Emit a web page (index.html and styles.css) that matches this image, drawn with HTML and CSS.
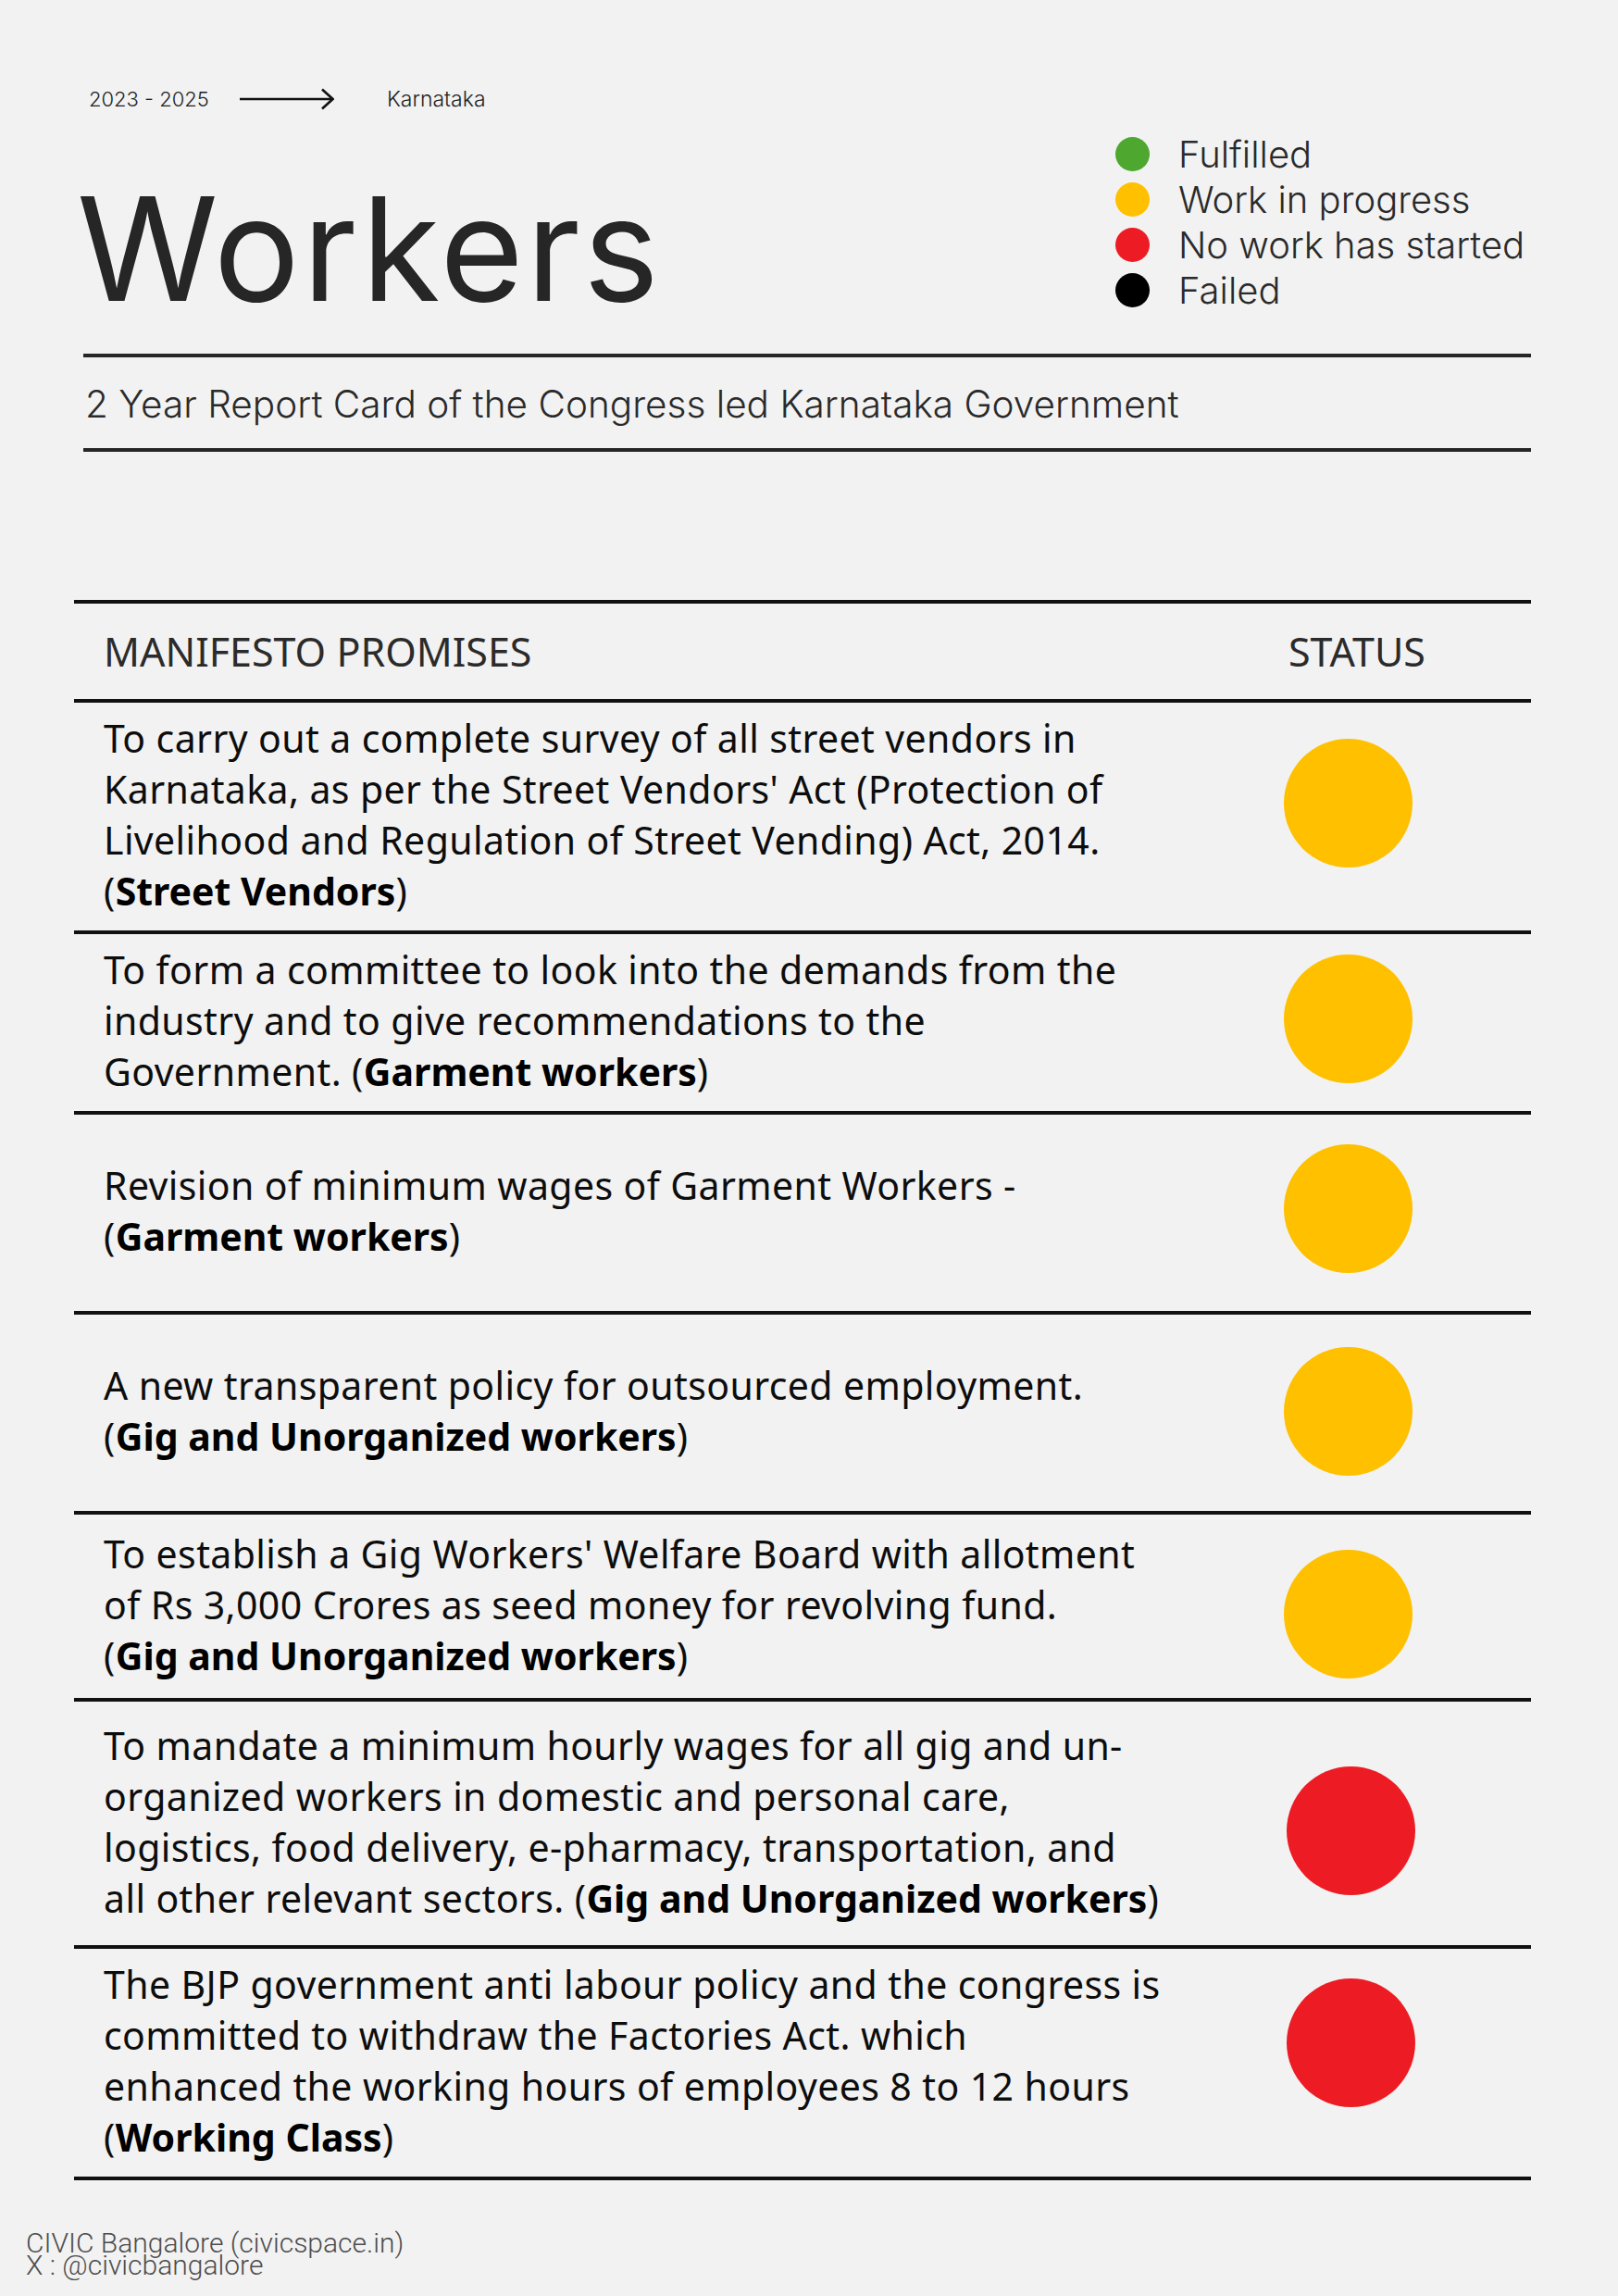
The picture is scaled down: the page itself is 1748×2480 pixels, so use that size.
FILE: index.html
```html
<!DOCTYPE html>
<html lang="en">
<head>
<meta charset="utf-8">
<title>Workers – 2 Year Report Card</title>
<link rel="stylesheet" href="styles.css">
</head>
<body>
<div class="page">
  <header class="top">
    <div class="top-left">
      <div class="meta">
        <span class="meta-years">2023 - 2025</span>
        <svg class="meta-arrow" viewBox="0 0 102 24" aria-hidden="true">
          <line x1="0" y1="12" x2="100" y2="12" stroke="#111" stroke-width="2.6"/>
          <polyline points="89,1.5 100.5,12 89,22.5" fill="none" stroke="#111" stroke-width="2.6" stroke-linejoin="miter"/>
        </svg>
        <span class="meta-place">Karnataka</span>
      </div>
      <h1 class="title">Workers</h1>
    </div>
    <ul class="legend">
      <li class="legend-item"><span class="legend-dot legend-dot--green"></span>Fulfilled</li>
      <li class="legend-item"><span class="legend-dot legend-dot--yellow"></span>Work in progress</li>
      <li class="legend-item"><span class="legend-dot legend-dot--red"></span>No work has started</li>
      <li class="legend-item"><span class="legend-dot legend-dot--black"></span>Failed</li>
    </ul>
  </header>

  <div class="subtitle">2 Year Report Card of the Congress led Karnataka Government</div>

  <section class="table">
    <div class="thead">
      <div class="th th-promise">MANIFESTO PROMISES</div>
      <div class="th th-status">STATUS</div>
    </div>
    <div class="tbody">
      <div class="row">
        <p class="promise">To carry out a complete survey of all street vendors in<br>Karnataka, as per the Street Vendors' Act (Protection of<br>Livelihood and Regulation of Street Vending) Act, 2014.<br>(<b>Street Vendors</b>)</p>
        <div class="status"><span class="dot dot--yellow"></span></div>
      </div>
      <div class="row">
        <p class="promise">To form a committee to look into the demands from the<br>industry and to give recommendations to the<br>Government. (<b>Garment workers</b>)</p>
        <div class="status"><span class="dot dot--yellow"></span></div>
      </div>
      <div class="row">
        <p class="promise">Revision of minimum wages of Garment Workers -<br>(<b>Garment workers</b>)</p>
        <div class="status"><span class="dot dot--yellow"></span></div>
      </div>
      <div class="row">
        <p class="promise">A new transparent policy for outsourced employment.<br>(<b>Gig and Unorganized workers</b>)</p>
        <div class="status"><span class="dot dot--yellow"></span></div>
      </div>
      <div class="row">
        <p class="promise">To establish a Gig Workers' Welfare Board with allotment<br>of Rs 3,000 Crores as seed money for revolving fund.<br>(<b>Gig and Unorganized workers</b>)</p>
        <div class="status"><span class="dot dot--yellow"></span></div>
      </div>
      <div class="row">
        <p class="promise">To mandate a minimum hourly wages for all gig and un-<br>organized workers in domestic and personal care,<br>logistics, food delivery, e-pharmacy, transportation, and<br>all other relevant sectors. (<b>Gig and Unorganized workers</b>)</p>
        <div class="status"><span class="dot dot--red"></span></div>
      </div>
      <div class="row">
        <p class="promise">The BJP government anti labour policy and the congress is<br>committed to withdraw the Factories Act. which<br>enhanced the working hours of employees 8 to 12 hours<br>(<b>Working Class</b>)</p>
        <div class="status"><span class="dot dot--red"></span></div>
      </div>
    </div>
  </section>

  <footer class="footer">
    <div>CIVIC Bangalore (civicspace.in)</div>
    <div>X : @civicbangalore</div>
  </footer>
</div>
</body>
</html>
```

FILE: styles.css
```css
* { box-sizing: border-box; }

body {
  margin: 0;
  background: #f2f2f2;
}

.page {
  width: 1748px;
  height: 2480px;
  background: #f2f2f2;
  overflow: hidden;
}

/* ---------- top header ---------- */
.top {
  display: grid;
  grid-template-columns: 1122px 1fr;
  padding: 92px 0 0 83px;
}

.meta {
  display: flex;
  align-items: center;
  height: 30px;
  padding-left: 13px;
  font-family: Inter, "Liberation Sans", sans-serif;
  font-weight: 300;
  font-size: 22px;
  line-height: 30px;
  color: #1f1f1f;
}

.meta-place {
  font-size: 23px;
}

.meta-arrow {
  width: 102px;
  height: 24px;
  margin: 0 57px 0 33px;
  flex: none;
}

.title {
  margin: 69px 0 0;
  font-family: Inter, "Liberation Sans", sans-serif;
  font-weight: 400;
  font-size: 155px;
  line-height: 155px;
  letter-spacing: 3px;
  color: #262626;
}

.legend {
  list-style: none;
  margin: 50px 0 0;
  padding: 0;
  font-family: Inter, "Liberation Sans", sans-serif;
  font-weight: 300;
  font-size: 40px;
  color: #2a2a2a;
}

.legend-item {
  display: flex;
  align-items: center;
  height: 49px;
  line-height: 49px;
  gap: 31px;
}

.legend-dot {
  width: 37px;
  height: 37px;
  border-radius: 50%;
  flex: none;
}
.legend-dot--green { background: #4ea72e; }
.legend-dot--yellow { background: #ffc000; }
.legend-dot--red { background: #ed1c24; }
.legend-dot--black { background: #000; }

/* ---------- subtitle band ---------- */
.subtitle {
  width: 1564px;
  margin: 36px 0 0 90px;
  padding: 26px 0 22px 2px;
  border-top: 4px solid #262626;
  border-bottom: 4px solid #262626;
  font-family: Inter, "Liberation Sans", sans-serif;
  font-weight: 300;
  font-size: 40.5px;
  line-height: 50px;
  color: #2a2a2a;
}

/* ---------- table ---------- */
.table {
  width: 1574px;
  margin: 160px 0 0 80px;
  border-bottom: 4px solid #111;
  font-family: "Noto Sans", "Open Sans", sans-serif;
}

.thead,
.row {
  display: grid;
  grid-template-columns: 1307px 1fr;
  align-items: center;
  border-top: 4px solid #111;
}

.thead {
  height: 107px;
  font-size: 43px;
  line-height: 55px;
  color: #2b2b2b;
}

.th-promise { padding-left: 32px; }
.th-status { padding-left: 5px; }

.promise {
  margin: 0;
  padding: 0 0 4px 32px;
  font-size: 41px;
  line-height: 55px;
  letter-spacing: 0.4px;
  color: #0d0d0d;
}

.promise b {
  font-weight: 700;
  letter-spacing: 0;
  color: #000;
}

.status {
  display: flex;
  flex-direction: column;
}

.dot {
  width: 139px;
  height: 139px;
  border-radius: 50%;
}
.dot--yellow { background: #ffc000; }
.dot--red { background: #ed1c24; margin-left: 3px; }

/* row heights and dot placement follow the source layout */
.row:nth-child(1) { height: 250px; }
.row:nth-child(1) .dot { margin-bottom: 29px; }
.row:nth-child(2) { height: 195px; }
.row:nth-child(2) .dot { margin-bottom: 8px; }
.row:nth-child(3) { height: 216px; }
.row:nth-child(3) .dot { margin-bottom: 10px; }
.row:nth-child(4) { height: 216px; }
.row:nth-child(4) .dot { margin-bottom: 3px; }
.row:nth-child(5) { height: 202px; }
.row:nth-child(5) .dot { margin-top: 17px; }
.row:nth-child(6) { height: 267px; }
.row:nth-child(6) .dot { margin-top: 16px; }
.row:nth-child(7) { height: 250px; }
.row:nth-child(7) .dot { margin-bottom: 43px; }

/* ---------- footer ---------- */
.footer {
  margin: 56px 0 0 28px;
  font-family: Roboto, "Liberation Sans", sans-serif;
  font-weight: 300;
  font-size: 30px;
  line-height: 24px;
  color: #4d4d4d;
}
```
